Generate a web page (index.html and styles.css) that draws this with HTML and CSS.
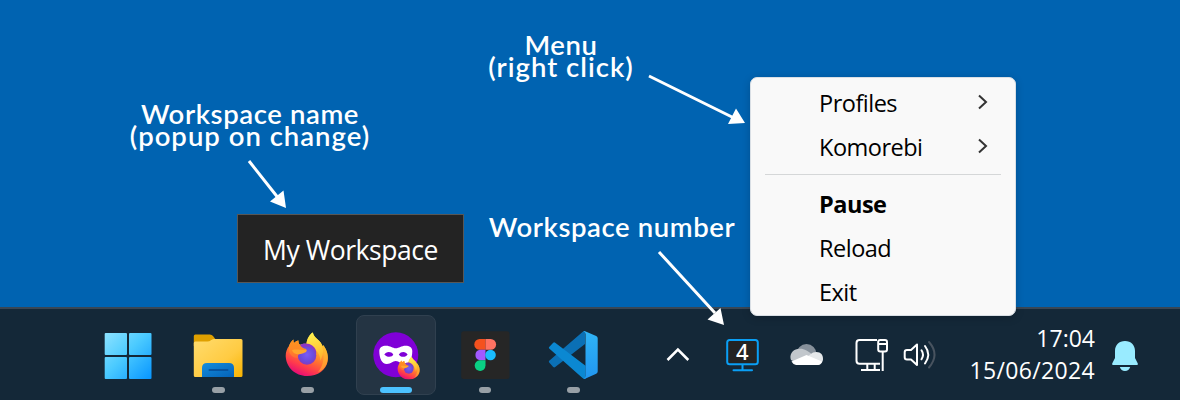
FILE: index.html
```html
<!DOCTYPE html>
<html lang="en">
<head>
<meta charset="utf-8">
<title>Workspace tray indicator</title>
<link rel="stylesheet" href="styles.css">
</head>
<body>
<svg class="defs" width="0" height="0">
  <defs>
    <linearGradient id="win" x1="105" y1="333" x2="151" y2="379" gradientUnits="userSpaceOnUse"><stop offset="0" stop-color="#8ce2ff"/><stop offset=".45" stop-color="#4ccbff"/><stop offset="1" stop-color="#0896ff"/></linearGradient>
    <linearGradient id="folder" x1="0" y1="0" x2="1" y2="1"><stop offset="0" stop-color="#ffdc6e"/><stop offset=".6" stop-color="#ffcb42"/><stop offset="1" stop-color="#f8b300"/></linearGradient>
    <linearGradient id="pocket" x1="0" y1="0" x2="1" y2="1"><stop offset="0" stop-color="#158ddc"/><stop offset="1" stop-color="#0462b8"/></linearGradient>
    <linearGradient id="foxBody" x1=".8" y1="0" x2=".35" y2="1"><stop offset="0" stop-color="#fff04a"/><stop offset=".3" stop-color="#ffbd30"/><stop offset=".58" stop-color="#ff7430"/><stop offset=".8" stop-color="#ff3a4c"/><stop offset="1" stop-color="#e50a78"/></linearGradient>
    <radialGradient id="foxGlobe" cx=".5" cy=".45" r=".6"><stop offset="0" stop-color="#7a5cf6"/><stop offset=".6" stop-color="#6b4bdc"/><stop offset="1" stop-color="#8a35b8"/></radialGradient>
    <linearGradient id="foxTail" x1=".3" y1="0" x2=".5" y2="1"><stop offset="0" stop-color="#fff44f"/><stop offset="1" stop-color="#ffb22c"/></linearGradient>
    <linearGradient id="foxHead" x1="0" y1="0" x2="0" y2="1"><stop offset="0" stop-color="#ff931c"/><stop offset=".5" stop-color="#ff8a26"/><stop offset="1" stop-color="#ff6a36"/></linearGradient>
    <linearGradient id="codeRight" x1="0" y1="0" x2="0" y2="1"><stop offset="0" stop-color="#30b4f5"/><stop offset="1" stop-color="#2196f0"/></linearGradient>
    <symbol id="firefox" viewBox="0 0 44 44">
      <path fill="url(#foxBody)" d="M4 14c1-3 2.500-5 4.500-6.500-.2 1.500 0 2.500.5 3.500 1.500-1.500 3-2.300 4.500-2.500-.3 1.800.3 3.200 1.500 4.300C17 12 19.500 11.500 21.500 12c.3-5 3-9.500 6.300-11.500C28.500 4 31 6 34 8.700c1.800 1.700 2.800 3.400 3.200 5.300l1.300-.8c3.500 5 5.200 10.500 4.200 16C41 38 33 44 22 44 10 44 1 35 .7 24c0-4 1.300-7.500 3.300-10z"/>
      <path fill="url(#foxTail)" d="M21.500 12c.3-5 3-9.500 6.300-11.500C28.500 4 31 6 34 8.700c5.500 5.300 5.200 12 1.500 20-.5-7-4-12-14-16.700z"/>
      <path fill="#ffb52e" opacity=".6" d="M38.500 13.200c3.800 5.500 5 11 3.500 17-1.500 6-6 9-9 10 5.500-7 7-15 4.200-26z"/>
      <path fill="#8c36c6" d="M14 13.500c4-3 10-2.500 13.500.2 3 2.300 4 5 3.700 8l-8 2z"/>
      <circle cx="22" cy="23.500" r="9.300" fill="url(#foxGlobe)"/>
      <path fill="url(#foxHead)" d="M4 14c1-3 2.500-5 4.500-6.500-.2 1.500 0 2.500.5 3.500 1.500-1.500 3-2.300 4.500-2.500-.3 1.800.3 3.200 1.500 4.300 1 2 3 4.200 6.500 4.200-.5 2.700-4 3.500-6.500 4.300-1.500.9-2.300 2.500-2.300 4.700C8 26 5 23 4 19z"/>
      <path fill="#ffa52d" d="M7 18c5-1.300 8 .2 15 .2-1 2.800-4 2.800-6.300 3.800C12 23 8 22 7 18z"/>
    </symbol>
  </defs>
</svg>
<main class="screen">
  <div class="note note-popup">Workspace name<br><span class="wide">(popup on change)</span></div>
  <div class="note note-menu">Menu<br><span class="wide">(right click)</span></div>
  <div class="note note-number">Workspace number</div>
  <div class="popup"><span>My Workspace</span></div>

  <footer class="taskbar">
    <nav class="apps">
      <div class="app start"><svg width="80" height="91" viewBox="88 309 80 91"><g fill="url(#win)"><rect x="104.700" y="333" width="22.300" height="22" rx="1"/><rect x="129" y="333" width="22.500" height="22" rx="1"/><rect x="104.700" y="357" width="22.300" height="22" rx="1"/><rect x="129" y="357" width="22.500" height="22" rx="1"/></g></svg></div>
      <div class="app"><svg width="80" height="91" viewBox="178.500 309 80 91"><path fill="#dfa000" d="M194.300 346v-10q0-1.500 1.500-1.500h14.500q2 0 3.200 1.500l3 4-6 5z"/><path fill="url(#folder)" d="M194.300 343q0-1.500 1.500-1.500h12q2 0 4-1.500t4-1h25.700q1.500 0 1.500 1.500V375.500q0 1.500-1.500 1.500h-45.700q-1.500 0-1.500-1.500z"/><path fill="url(#pocket)" d="M202.500 377v-9q0-5 5-5h22q5 0 5 5v9z"/><path stroke="#0754a0" stroke-width="2" stroke-linecap="round" d="M210 370h18"/></svg><i class="dot"></i></div>
      <div class="app"><svg width="80" height="91" viewBox="267.500 309 80 91"><use href="#firefox" x="285.500" y="332" width="44" height="44"/></svg><i class="dot"></i></div>
      <div class="app active"><svg width="80" height="91" viewBox="356 309 80 91"><circle cx="395.800" cy="354.800" r="22.500" fill="#8000d7"/><path fill="#fff" fill-rule="evenodd" d="M379.300 351c0-3.500 3-5.200 6.700-5.200 4.500 0 6.500 2.500 9.800 2.500s5.300-2.500 9.800-2.500c3.700 0 6.700 1.700 6.700 5.200 0 7-2.500 13-7.500 13-4.500 0-5.500-3-9-3s-4.500 3-9 3c-5 0-7.500-6-7.500-13zm5 3.500c1.700 1.700 3 2.300 5 2.300s3.300-1 4-2.300c-1.300-1.800-2.500-2.500-4.500-2.500s-3.500 1-4.500 2.500zm14.500 0c1 1.500 2.300 2.300 4.300 2.300s3.500-.8 4.500-2.300c-1-1.500-2.500-2.500-4.300-2.500s-3.300.8-4.500 2.500z"/><use href="#firefox" x="397" y="356.500" width="23.500" height="23"/></svg><i class="dot"></i></div>
      <div class="app"><svg width="80" height="91" viewBox="444.500 309 80 91"><rect x="460.700" y="331.300" width="48.300" height="47.700" rx="2.500" fill="#262626"/><path fill="#f4511e" d="M485 339h-5.800a5.400 5.400 0 0 0 0 10.800h5.800z"/><path fill="#ff7262" d="M485 339h5.200a5.400 5.400 0 0 1 0 10.800H485z"/><path fill="#a259ff" d="M485 349.800h-5.800a5.300 5.300 0 0 0 0 10.400h5.800z"/><circle cx="490" cy="355" r="5.300" fill="#1abcfe"/><path fill="#0acf83" d="M485 360.200h-5.800a5.400 5.400 0 1 0 5.800 5.400z"/></svg><i class="dot"></i></div>
      <div class="app"><svg width="80" height="91" viewBox="533 309 80 91"><path fill="#0b70b5" d="M549.200 362.500l4 4.500q1 .8 2 0L585 344v-13q-1.500 0-2.800 1.200l-33 28.500q-.8.800 0 1.800z"/><path fill="#0b88d2" d="M549.200 347l4-4.300q1-.8 2 0L585.500 365.700V379q-2 0-3.300-1.300l-33-29.200q-.7-.7 0-1.500z"/><path fill="url(#codeRight)" d="M584.500 331l11.700 5q1.500.8 1.500 2.300v33.200q0 1.500-1.500 2.300l-11.700 5.200h-1.300q2.300-.5 2.300-3v-42q0-2.500-2.300-3z"/></svg><i class="dot"></i></div>
    </nav>
    <div class="tray">
      <svg width="50" height="91" viewBox="655 309 50 91"><path fill="none" stroke="#fff" stroke-width="2.500" d="M667.500 360l10.400-10.500L688.300 360"/></svg>
      <svg width="74" height="91" viewBox="705 309 74 91"><rect x="727.200" y="340" width="30.600" height="24.300" rx="2.500" fill="#232323" stroke="#0a9ff5" stroke-width="2"/><path stroke="#0a9ff5" stroke-width="2" stroke-linecap="round" d="M742.500 365v5M733.500 370.200h18.500"/><text class="digit" x="742.400" y="360" text-anchor="middle">4</text></svg>
      <svg width="60" height="91" viewBox="780 309 60 91"><circle cx="807.500" cy="354" r="10" fill="#87919b"/><path fill="#c2c7cc" d="M792 360a8 8 0 0 1 6.500-11c6-1 9 1 17 7l-16 8z"/><path fill="#e5e8ea" d="M807 357.500l7-5c7-2 10 2 10 6.300 0 3-2 6.200-5 6.200z"/><path fill="#fff" d="M792.500 361.500l15-6.500 15.500 6.500c-1 2-2.500 3.500-4.500 3.500H797q-3-.5-4.500-3.500z"/></svg>
      <svg width="56" height="91" viewBox="839 309 56 91"><g fill="none" stroke="#fff" stroke-width="2"><path d="M877 340h-17.500q-3 0-3 3v17.700q0 3 3 3H880M861 370h19M867.300 364v6M874.700 364v6"/><rect x="878.200" y="340" width="8.800" height="11.500" rx="2"/><path d="M878 344h9M882.700 352v19"/></g></svg>
      <svg width="58" height="91" viewBox="895 309 58 91"><g fill="none" stroke="#fff" stroke-width="2" stroke-linejoin="round" stroke-linecap="round"><path d="M917 344.500v20.500l-6-5.500h-4q-2.300 0-2.300-2.300v-5q0-2.300 2.300-2.300h4z"/><path d="M921.500 350.300q3 4.500 0 9M925 346q6.500 8.500 0 17.500"/><path stroke="#48535f" d="M929 342q11 12.500 0 25.500"/></g></svg>
      <div class="clock"><span>17:04</span><span class="date">15/06/2024</span></div>
      <svg width="60" height="91" viewBox="1095 309 60 91"><path fill="#99ebff" d="M1115 351c0-6 4-10 10-10s10 4 10 10v7l2.800 5.500q.5 1.500-1 1.500h-23.600q-1.500 0-1-1.500L1115 358zM1119.800 367h10.400c-1 2.500-2.500 4-5.200 4s-4.200-1.500-5.200-4z"/></svg>
    </div>
  </footer>

  <section class="menu">
    <div class="item"><span>Profiles</span><svg width="12" height="16" viewBox="0 0 12 16"><path d="M2 1.500L9 8l-7 6.500"/></svg></div>
    <div class="item"><span>Komorebi</span><svg width="12" height="16" viewBox="0 0 12 16"><path d="M2 1.500L9 8l-7 6.500"/></svg></div>
    <hr>
    <div class="item bold"><span>Pause</span></div>
    <div class="item"><span>Reload</span></div>
    <div class="item"><span>Exit</span></div>
  </section>

  <svg class="arrows" width="1180" height="400" viewBox="0 0 1180 400">
    <g stroke="#fff" stroke-width="3"><path d="M249 161l30 38M649 76l84 41.500M659 252l56 61"/></g>
    <g fill="#fff"><path d="M286 208l-2.500-17.500-13.500 11zM745 123l-9-14.500-8 15.500zM724 325l-3.500-17-13 11.500z"/></g>
  </svg>
</main>
</body>
</html>
```
FILE: styles.css
```css
body { margin: 0; }
.defs { position: absolute; }
.screen { position: relative; display: flex; flex-direction: column; justify-content: flex-end; width: 1180px; height: 400px; overflow: hidden; background: #0063b1; font-family: "Open Sans", "Noto Sans", sans-serif; }
.note { position: absolute; color: #fff; font: 600 27.500px/22px Lato, sans-serif; letter-spacing: .6px; text-align: center; white-space: nowrap; }
.wide { letter-spacing: 1px; }
.note-popup { left: 100px; top: 103px; width: 300px; }
.note-menu { left: 461px; top: 34px; width: 200px; }
.note-number { left: 462px; top: 216px; width: 300px; }
.popup { position: absolute; left: 237px; top: 214px; width: 225px; height: 67px; border: 1px solid #575757; background: #232323; color: #fff; display: flex; align-items: center; justify-content: center; font-size: 26.500px; letter-spacing: -.450px; }
.popup span { padding-top: 3px; }
.taskbar { display: flex; justify-content: space-between; height: 91px; border-top: 2px solid #394654; background: #142838; }
.apps { display: flex; gap: 8.700px; padding-left: 88px; }
.app { position: relative; width: 80px; height: 91px; }
.app svg { position: relative; display: block; }
.start { margin-right: 1.800px; }
.active::before { content: ""; position: absolute; left: 0; top: 6px; width: 78px; height: 78px; border: 1px solid #30404f; border-radius: 8px; background: #243443; }
.dot { position: absolute; left: 34px; bottom: 7px; width: 12.500px; height: 6px; border-radius: 3px; background: #98a0a6; }
.active .dot { left: 24px; width: 32px; background: #4cc2ff; }
.tray { display: flex; margin-right: 25px; }
.digit { font: 500 22px "Noto Sans", sans-serif; fill: #fff; }
.clock { display: flex; flex-direction: column; align-items: flex-end; width: 142px; padding-top: 13px; color: #fff; font-size: 23px; line-height: 32px; white-space: nowrap; }
.date { letter-spacing: .350px; }
.menu { position: absolute; left: 750px; top: 77px; width: 264px; height: 234px; padding-top: 3px; border: 1px solid #d9dfe5; border-radius: 7px; background: #f9f9f9; box-shadow: 0 2px 8px rgba(0,0,0,.18); color: #000; font-size: 23.500px; letter-spacing: -.500px; }
.item { display: flex; justify-content: space-between; align-items: center; height: 44px; padding: 0 26px 0 68px; }
.item svg { fill: none; stroke: #333; stroke-width: 2; margin-top: -2px; }
.menu hr { height: 1px; margin: 5px 14px 7px; border: 0; background: #d5d7d8; }
.bold { font-weight: 700; }
.arrows { position: absolute; inset: 0; }
```
